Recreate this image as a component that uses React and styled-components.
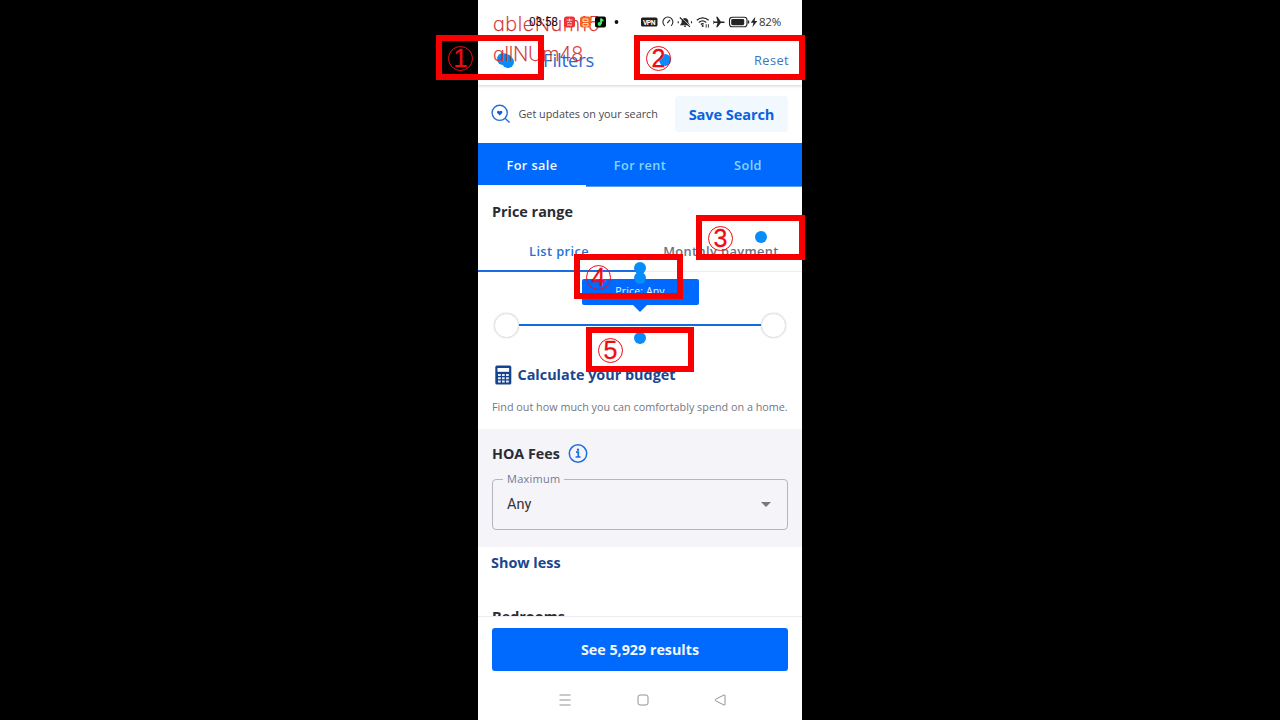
import React from "react";
import styled, { createGlobalStyle } from "styled-components";

const Global = createGlobalStyle`
  * { box-sizing: border-box; }
  body { margin: 0; background: #000; overflow: hidden; }
`;

const Stage = styled.main`
  position: relative;
  width: 1280px;
  height: 720px;
  display: flex;
  justify-content: center;
  background: #000;
  overflow: hidden;
  font-family: "Open Sans", "Noto Sans", sans-serif;
`;

const Phone = styled.div`
  width: 324px;
  height: 720px;
  display: flex;
  flex-direction: column;
  background: #fff;
  overflow: hidden;
`;

const Label = styled.span`
  font-size: ${(p) => p.$size}px;
  font-weight: ${(p) => p.$weight || 400};
  letter-spacing: ${(p) => p.$track || 0}px;
  color: ${(p) => p.$color || "#2b2b33"};
  line-height: ${(p) => p.$line || 20}px;
  white-space: nowrap;
`;

const StatusBar = styled.header`
  position: relative;
  z-index: 1;
  flex: none;
  height: 43px;
  padding: 0 21px 0 51px;
  display: flex;
  align-items: center;
  justify-content: space-between;
`;

const StatusSide = styled.div`
  display: flex;
  align-items: center;
`;

const Clock = styled.span`
  width: 35px;
  font: 400 12px/16px Roboto, sans-serif;
  letter-spacing: -0.2px;
  color: #111;
`;

const TitleBar = styled.div`
  flex: none;
  height: 42px;
  padding: 0 13px 9px 65px;
  display: flex;
  align-items: center;
  justify-content: space-between;
  box-shadow: 0 1px 3px rgba(0, 0, 0, 0.18);
  clip-path: inset(0 0 -5px 0);
`;

const SaveRow = styled.section`
  flex: none;
  height: 58px;
  padding: 0 14px 0 13px;
  display: flex;
  align-items: center;
`;

const SaveText = styled.div`
  flex: 1;
  display: flex;
  padding-left: 7.5px;
`;

const SaveButton = styled.button`
  width: 113px;
  height: 36px;
  padding: 0;
  border: 0;
  border-radius: 4px;
  background: #f1f8fe;
  font: 700 14.6px/35px "Open Sans", sans-serif;
  letter-spacing: -0.1px;
  color: #0a62e0;
`;

const Tabs = styled.nav`
  flex: none;
  height: 44px;
  display: flex;
  background: #006aff;
`;

const Tab = styled.div`
  flex: 1;
  text-align: center;
  font-size: 12.7px;
  line-height: 44px;
  font-weight: 600;
  letter-spacing: 0.4px;
  color: ${(p) => (p.$active ? "#f4faff" : "#86d5fb")};
  border-bottom: ${(p) => (p.$active ? "2px solid #fff" : "1px solid #5c9fee")};
`;

const PriceSection = styled.section`
  flex: none;
  height: 242px;
  display: flex;
  flex-direction: column;
`;

const SectionTitle = styled.h2`
  margin: 0;
  padding: 15px 14px 0;
  font-size: 14.4px;
  line-height: 20px;
  font-weight: 700;
  color: #2b2b33;
`;

const PriceTabs = styled.div`
  flex: none;
  height: 50px;
  display: flex;
  border-bottom: 1px solid #e8eef4;
`;

const PriceTab = styled.div`
  flex: 1;
  height: 50px;
  padding-top: 19px;
  text-align: center;
  font-size: 12.8px;
  line-height: 20px;
  font-weight: 600;
  letter-spacing: 0.4px;
  color: ${(p) => (p.$active ? "#2572d8" : "#667483")};
  border-bottom: ${(p) => (p.$active ? "2px solid #1a6ce4" : "0")};
`;

const Tooltip = styled.div`
  flex: none;
  align-self: center;
  width: 117px;
  height: 26px;
  margin-top: 7px;
  border-radius: 2px;
  background: #006aff;
  text-align: center;
  font-size: 10.6px;
  line-height: 24px;
  letter-spacing: 0.1px;
  color: #e6f1ff;
`;

const TooltipTail = styled.div`
  align-self: center;
  border: 7px solid transparent;
  border-top-color: #006aff;
  border-bottom: 0;
`;

const Slider = styled.div`
  flex: none;
  height: 26px;
  padding: 0 16px;
  display: flex;
  align-items: center;
`;

const Handle = styled.div`
  width: 25px;
  height: 25px;
  border-radius: 50%;
  background: #fff;
  border: 1px solid #e2e2e2;
  box-shadow: 0 0 2px rgba(0, 0, 0, 0.16);
`;

const Track = styled.div`
  flex: 1;
  height: 2px;
  background: #1769e0;
`;

const Budget = styled.div`
  display: flex;
  align-items: center;
  gap: 5.5px;
  padding: 27px 0 0 17px;
`;

const Hint = styled.div`
  display: flex;
  padding: 12px 0 0 14px;
`;

const Hoa = styled.section`
  flex: none;
  height: 118px;
  padding: 15px 14px 0;
  background: #f4f4f9;
`;

const HoaTitle = styled.div`
  height: 20px;
  display: flex;
  align-items: center;
  gap: 8px;
`;

const Select = styled.fieldset`
  height: 58px;
  margin: 8px 0 0;
  padding: 0 16px 0 14px;
  border: 1px solid #b5b6bd;
  border-radius: 4px;
  min-width: 0;
`;

const Legend = styled.legend`
  margin-left: -4px;
  padding: 0 4px;
  font-size: 11px;
  line-height: 14px;
  letter-spacing: 0.25px;
  color: #737b93;
`;

const SelectValue = styled.div`
  height: 37px;
  display: flex;
  align-items: center;
  justify-content: space-between;
  font-family: Roboto, sans-serif;
`;

const Caret = styled.div`
  border: 5px solid transparent;
  border-top-color: #77777d;
  border-bottom: 0;
`;

const More = styled.section`
  flex: none;
  height: 69px;
  padding: 6px 13px 0;
  display: flex;
  flex-direction: column;
  overflow: hidden;
`;

const Bedrooms = styled.h2`
  margin: 34px 0 0 1px;
  font-size: 14.4px;
  line-height: 20px;
  font-weight: 700;
  color: #2b2b33;
`;

const Footer = styled.footer`
  flex: none;
  height: 64px;
  padding: 10.5px 14px 0;
  border-top: 1px solid #ececf0;
`;

const ResultsButton = styled.button`
  width: 296px;
  height: 43px;
  padding: 0;
  border: 0;
  border-radius: 3px;
  background: #006aff;
  font: 700 14.3px/43px "Open Sans", sans-serif;
  color: #f1f8ff;
`;

const NavBar = styled.div`
  flex: none;
  height: 39px;
  padding: 0 76px 0 81px;
  display: flex;
  align-items: center;
  justify-content: space-between;
`;

const Box = styled.div`
  position: absolute;
  left: ${(p) => p.$x}px;
  top: ${(p) => p.$y}px;
  width: ${(p) => p.$w}px;
  height: 45px;
  padding: 1px 0 0 6px;
  border: 6px solid #f80000;
  display: flex;
  align-items: center;
`;

const Num = styled.span`
  width: 25px;
  height: 25px;
  border: 1.4px solid #f00a12;
  border-radius: 50%;
  text-align: center;
  font: 400 25px/23px "Liberation Sans", sans-serif;
  -webkit-text-stroke: 0.3px #f00a12;
  color: #f00a12;
`;

const Dot = styled.div`
  position: absolute;
  left: ${(p) => p.$x - 6}px;
  top: ${(p) => p.$y - 6}px;
  width: 12px;
  height: 12px;
  border-radius: 50%;
  background: #088cfa;
`;

const Note = styled.div`
  position: absolute;
  left: 493px;
  top: ${(p) => p.$y}px;
  font: 200 20px/24px Inter, sans-serif;
  font-feature-settings: "cv11";
  letter-spacing: ${(p) => p.$track}px;
  -webkit-text-stroke: 0.25px #d22a2a;
  color: #d22a2a;
  white-space: nowrap;
`;

const AppIcons = () => (
  <svg width="56" height="12" viewBox="0 0 56 12">
    <rect x="0" y="0.5" width="11" height="11" rx="2.5" fill="#ee3038" />
    <path d="M2.5 4h6M5.5 2.5V5M3 7q2.500-2 5 0M3 9h5" stroke="#ffd5d5" strokeWidth="1" fill="none" />
    <rect x="16" y="0.500" width="11" height="11" rx="2.500" fill="#f36423" />
    <path d="M19 3h5v2.500h-5zM19 7.500h5V10h-5z" stroke="#ffe2cf" strokeWidth="1" fill="none" />
    <rect x="31" y="0.500" width="11" height="11" rx="2" fill="#060808" />
    <circle cx="35.500" cy="8" r="1.900" fill="#38e66b" />
    <path d="M37 8V2.500q.3 2 2.500 2.200" stroke="#50ed72" strokeWidth="1.800" fill="none" />
    <circle cx="52.500" cy="6" r="1.900" fill="#111" />
  </svg>
);

const SystemIcons = () => (
  <svg width="118" height="14" viewBox="0 0 118 14" fill="none" stroke="#242424" strokeWidth="1.100">
    <rect x="0" y="2.500" width="16.500" height="9" rx="1.500" fill="#1e1e1e" stroke="none" />
    <text x="8.200" y="9.600" fill="#fff" stroke="none" fontFamily="Roboto, sans-serif" fontSize="6.800" fontWeight="700" textAnchor="middle" textLength="12.500">VPN</text>
    <path d="M23.700 10.800a5 5 0 1 1 6.400 0M26.300 8.200l2.700-3.400" />
    <path d="M40 9.800h8l-1.200-1.600V5.800a2.900 2.900 0 0 0-5.600 0v2.400zM43 11.300h2" fill="#2a2a2a" />
    <path d="M39.800 2.500l10.200 9.300" stroke="#fff" strokeWidth="1" />
    <path d="M38.800 2.500l10.200 9.300M37.200 6.200v2M50.500 6.200v2" />
    <path d="M55.800 5.300a8.600 8.600 0 0 1 11.800 0M57.800 7.500a5.700 5.700 0 0 1 7.400-.1M59.800 9.400a3 3 0 0 1 3-.4" strokeWidth="1.300" />
    <circle cx="61.700" cy="11" r="1" fill="#222" stroke="none" />
    <path d="M65.200 9.200v3.400M67.400 9.200v3.400" strokeWidth=".9" />
    <path d="M72 5.200l1.400 1.300h3.100L75.200 1.800h1.300L79.800 6.500h3.300q1.500.7 0 1.400h-3.300L76.500 12.300h-1.300l1.300-4.400h-3.100L72 9.200l.5-2z" fill="#242424" stroke="none" />
    <rect x="88.500" y="2.300" width="17.500" height="9.500" rx="2.800" />
    <rect x="90.200" y="4" width="13" height="6.200" rx="1.400" fill="#242424" stroke="none" />
    <path d="M107.500 5.500v3" strokeWidth="1.400" />
    <path d="M114.300 1.800l-4.600 6h2.700l-1 4.400 4.900-6.200h-2.700z" fill="#242424" stroke="none" />
  </svg>
);

const SearchHeart = () => (
  <svg width="20" height="20" viewBox="0 0 20 20" fill="none" stroke="#246fd5" strokeWidth="1.400">
    <circle cx="8.700" cy="8.800" r="7.600" />
    <path d="M14 14.200l4.600 4.400" />
    <path d="M8.700 11.500L6.200 9C5.300 7.300 7.500 5.900 8.700 7.500c1.200-1.600 3.400-.2 2.500 1.500z" fill="#1b59d0" stroke="none" />
  </svg>
);

const Calculator = () => (
  <svg width="17" height="20" viewBox="0 0 17 20">
    <rect x="0.300" y="0.500" width="16" height="19" rx="1.600" fill="#16448c" />
    <path d="M2.500 3h11.600v3.800H2.500z" fill="#fff" />
    <path d="M3 9h2.800v2H3zM7 9h2.700v2H7zM11 9h2.800v2H11zM3 12.200h2.800v2H3zM7 12.200h2.700v2H7zM11 12.200h2.800v2H11zM3 15.400h2.800v2H3zM7 15.400h2.700v2H7zM11 15.400h2.800v2H11z" fill="#e4eefb" />
  </svg>
);

const Info = () => (
  <svg width="20" height="20" viewBox="0 0 20 20" fill="none" stroke="#1d6fe0" strokeWidth="1.500">
    <circle cx="10" cy="9.500" r="8.700" />
    <path d="M8 8.200h2.300v4.500M7.600 13h5" strokeWidth="1.700" />
    <circle cx="10" cy="5.700" r="1.200" fill="#1d6fe0" stroke="none" />
  </svg>
);

const NavIcon = ({ d }) => (
  <svg width="12" height="12" viewBox="0 0 12 12" fill="none" stroke="#929292" strokeWidth="1">
    <path d={d} />
  </svg>
);

export default function App() {
  return (
    <Stage>
      <Global />
      <Phone>
        <StatusBar>
          <StatusSide>
            <Clock>03:58</Clock>
            <AppIcons />
          </StatusSide>
          <StatusSide>
            <SystemIcons />
            <Label $size={11.500} $color="#333" $line={16} $track={-0.2}>82%</Label>
          </StatusSide>
        </StatusBar>
        <TitleBar>
          <Label $size={18.400} $color="#2869d2" $track={-0.1}>Filters</Label>
          <Label $size={12.800} $color="#3974c6" $track={0.4}>Reset</Label>
        </TitleBar>
        <SaveRow>
          <SearchHeart />
          <SaveText><Label $size={10.800} $color="#48484e">Get updates on your search</Label></SaveText>
          <SaveButton>Save Search</SaveButton>
        </SaveRow>
        <Tabs>
          <Tab $active>For sale</Tab>
          <Tab>For rent</Tab>
          <Tab>Sold</Tab>
        </Tabs>
        <PriceSection>
          <SectionTitle>Price range</SectionTitle>
          <PriceTabs>
            <PriceTab $active>List price</PriceTab>
            <PriceTab>Monthly payment</PriceTab>
          </PriceTabs>
          <Tooltip>Price: Any</Tooltip>
          <TooltipTail />
          <Slider><Handle /><Track /><Handle /></Slider>
          <Budget>
            <Calculator />
            <Label $size={14.400} $weight={700} $color="#1a468d">Calculate your budget</Label>
          </Budget>
          <Hint><Label $size={10.800} $color="#73777f">Find out how much you can comfortably spend on a home.</Label></Hint>
        </PriceSection>
        <Hoa>
          <HoaTitle>
            <Label $size={14.300} $weight={700}>HOA Fees</Label>
            <Info />
          </HoaTitle>
          <Select>
            <Legend>Maximum</Legend>
            <SelectValue>
              <Label $size={14.500} $color="#34343a" $line={21}>Any</Label>
              <Caret />
            </SelectValue>
          </Select>
        </Hoa>
        <More>
          <Label $size={14.400} $weight={700} $color="#1a468d">Show less</Label>
          <Bedrooms>Bedrooms</Bedrooms>
        </More>
        <Footer><ResultsButton>See 5,929 results</ResultsButton></Footer>
        <NavBar>
          <NavIcon d="M.5 1h11M.5 6h11M.5 11h11" />
          <NavIcon d="M3 1h6q2 0 2 2v6q0 2-2 2H3q-2 0-2-2V3q0-2 2-2z" />
          <NavIcon d="M1.500 5.300Q.5 6 1.500 6.700L10 11q1 .4 1-.6V1.600q0-1-1-.6z" />
        </NavBar>
      </Phone>

      <Dot $x={503} $y={59} />
      <Dot $x={506} $y={60} />
      <Dot $x={508} $y={62} />
      <Dot $x={665} $y={60} />
      <Dot $x={761} $y={237} />
      <Dot $x={640} $y={268} />
      <Dot $x={640} $y={278} />
      <Dot $x={640} $y={338} />
      <Note $y={12} $track={0.5}>ableNum15</Note>
      <Note $y={42} $track={-0.3}>allNUm48</Note>
      <Box $x={436} $y={35} $w={108}><Num>1</Num></Box>
      <Box $x={634} $y={35} $w={171}><Num>2</Num></Box>
      <Box $x={696} $y={215} $w={109}><Num>3</Num></Box>
      <Box $x={574} $y={254} $w={109}><Num>4</Num></Box>
      <Box $x={586} $y={327} $w={108}><Num>5</Num></Box>
    </Stage>
  );
}
